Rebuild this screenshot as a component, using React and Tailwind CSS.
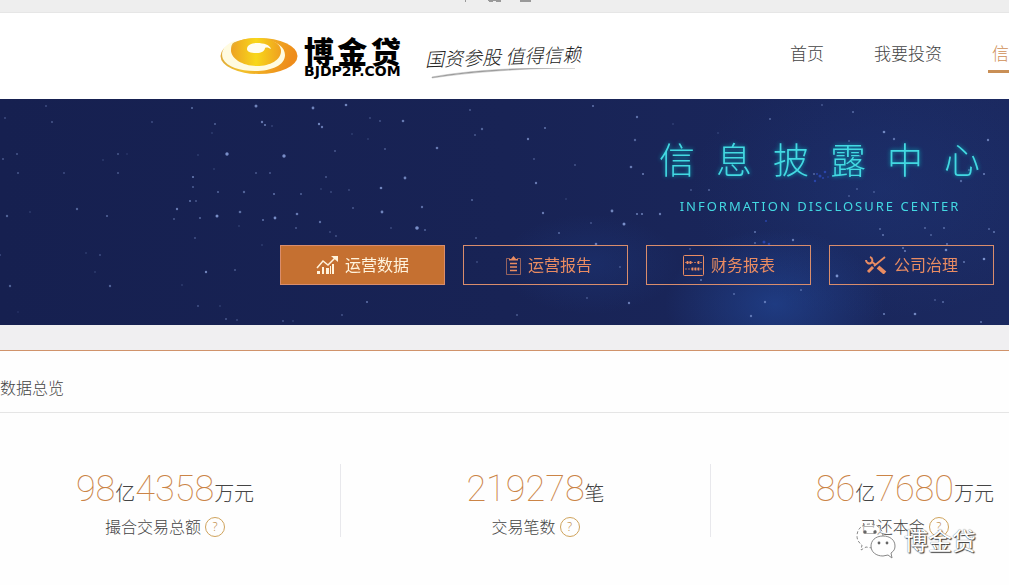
import React from "react";

// [x, y, radius, opacity]
const STARS = [
  [192, 9, 1, .7], [256, 7, 1.5, .9], [313, 9, 1.4, .9], [346, 6, 1.3, .9], [46, 7, 1, .4], [5, 19, 1, .4],
  [52, 23, 1, .5], [152, 23, 1, .4], [215, 25, 1, .6], [262, 23, 1.2, .8], [265, 26, 1.1, .8], [272, 27, .8, .5],
  [319, 25, 1.2, .9], [322, 28, 1.2, .8], [370, 19, .9, .4], [380, 22, .9, .5], [403, 22, 1.3, .8], [212, 34, .8, .4],
  [352, 35, .8, .4], [368, 40, .8, .4], [482, 30, 1.2, .6], [475, 36, 1, .5], [470, 11, 1, .5], [437, 49, 1.3, .8],
  [385, 50, 1, .5], [335, 52, 1, .5], [227, 55, 1.7, 1], [284, 57, 1.7, 1], [198, 56, .8, .4], [17, 55, 1, .5],
  [118, 55, 1, .5], [127, 55, .8, .3], [3, 60, 1, .5], [103, 61, .8, .4], [18, 74, 1, .5], [64, 74, 1, .4],
  [118, 74, 1, .5], [214, 70, .8, .4], [256, 74, 1, .5], [270, 74, 1, .5], [193, 78, 1.1, .8], [193, 88, .9, .6],
  [326, 78, 1, .5], [405, 79, 1.4, .9], [381, 89, 1.3, .9], [244, 93, 1.2, .6], [218, 93, 1.1, .6], [274, 95, 1.1, .7],
  [301, 95, 1, .6], [331, 93, .9, .4], [321, 90, .8, .4], [349, 91, .9, .4], [190, 102, 1.1, .7], [196, 102, 1, .5],
  [177, 110, 1.2, .8], [77, 110, 1.2, .6], [240, 113, 1.3, .7], [217, 117, 1.5, 1], [200, 119, 1.1, .6], [174, 120, 1, .5],
  [275, 119, 1.4, 1], [263, 121, 1.1, .7], [297, 115, 1.3, .8], [320, 123, 1.2, .7], [296, 129, 1, .5], [353, 109, 1, .5],
  [382, 113, 1.4, .9], [422, 108, 1.2, .7], [472, 101, 1.1, .6], [417, 129, 1.8, 1], [425, 131, 1, .6], [391, 129, .9, .4],
  [7, 117, 1.2, .6], [107, 117, 1.1, .6], [30, 113, .8, .4], [239, 127, .8, .4], [195, 139, .9, .5], [330, 133, .9, .4],
  [336, 137, .9, .5], [318, 147, .9, .4], [262, 146, .8, .4], [476, 139, 1, .5], [100, 156, 1, .4], [86, 154, .8, .4],
  [0, 156, 1, .4], [95, 173, .8, .4], [206, 173, 1.2, .9], [235, 171, 1, .5], [10, 187, 1.2, .6], [110, 187, 1.2, .6],
  [182, 186, .8, .4], [367, 203, 1.1, .7], [198, 207, .9, .5], [220, 207, .8, .4], [342, 216, .9, .5], [226, 220, 1, .5],
  [237, 221, .9, .4], [283, 222, .9, .5], [293, 222, .8, .4], [18, 213, .7, .3], [477, 163, .9, .4],
  [593, 7, 1.1, .7], [637, 18, 1.2, .7], [545, 29, 1.1, .7], [528, 40, 1.2, .8], [635, 41, 1.2, .6], [534, 60, .9, .5],
  [575, 66, .9, .5], [631, 68, 1.3, .8], [643, 75, 1.1, .8], [536, 84, 1.2, .8], [691, 91, .9, .5], [709, 91, 1, .6],
  [543, 114, 1.2, .8], [612, 112, 1.4, .9], [624, 125, 1.5, 1], [637, 115, 1.1, .8], [642, 115, 1.1, .8], [660, 115, 1.2, .8],
  [591, 124, .9, .5], [559, 134, 1.1, .6], [596, 145, 1.3, .8], [770, 20, 1, .6], [822, 6, .9, .5], [853, 13, 1.1, .6],
  [884, 33, 1.3, .9], [894, 40, 1.2, .7], [988, 41, 1.2, .8], [849, 42, .9, .5], [860, 57, .9, .5], [984, 75, 1.1, .8],
  [969, 71, 1.1, .6], [961, 82, 1.2, .6], [874, 93, .9, .5], [849, 97, .9, .5], [857, 90, .9, .5], [880, 130, 1, .6],
  [883, 136, 1.1, .7], [755, 133, 1.1, .7], [755, 144, 1, .6], [793, 141, 1.2, .8], [925, 129, 1, .6], [944, 129, 1.1, .6],
  [931, 136, .9, .6], [989, 130, 1, .6], [994, 133, 1.1, .7], [903, 149, 1.1, .7], [947, 145, 1.1, .7], [946, 151, 1.3, .9],
  [905, 152, 1.1, .8], [984, 160, 1.3, 1], [964, 163, 1.1, .7], [837, 177, 1.4, 1], [620, 168, .9, .5], [701, 181, 1.1, .7],
  [801, 191, 1, .6], [734, 195, 1, .6], [629, 204, 1.2, .8], [587, 199, .9, .5], [765, 203, 1.2, .7], [751, 217, 1.2, .7],
  [884, 215, 1.1, .8], [915, 215, 1.3, .9], [981, 223, 1.1, .7], [943, 203, 1.1, .6], [935, 201, .9, .5], [517, 216, 1, .5],
  [736, 109, .9, .4], [566, 100, .8, .4], [690, 150, .9, .5], [814, 75, 1, .6], [718, 34, .8, .4], [673, 25, .8, .4],
];

const navLinks = ["首页", "我要投资"];

function StarField() {
  return (
    <svg className="absolute inset-0 h-full w-full" viewBox="0 0 1009 226" preserveAspectRatio="xMinYMin slice" aria-hidden="true">
      <defs>
        <radialGradient id="nebula">
          <stop offset="0" stopColor="#2450a8" stopOpacity=".5" />
          <stop offset="1" stopColor="#2450a8" stopOpacity="0" />
        </radialGradient>
        <linearGradient id="night">
          <stop offset="0" stopColor="#162050" />
          <stop offset=".5" stopColor="#182355" />
          <stop offset="1" stopColor="#1b2960" />
        </linearGradient>
      </defs>
      <rect width="1009" height="226" fill="url(#night)" />
      <ellipse cx="775" cy="205" rx="110" ry="75" fill="url(#nebula)" />
      <ellipse cx="880" cy="90" rx="190" ry="130" fill="url(#nebula)" opacity=".35" />
      <ellipse cx="590" cy="165" rx="90" ry="50" fill="url(#nebula)" opacity=".4" />
      <g fill="#3457d8" opacity=".6">
        <circle cx="820" cy="77" r="1.5" /><circle cx="825" cy="73" r="1.3" /><circle cx="815" cy="82" r="1.2" />
        <circle cx="823" cy="79" r="1" /><circle cx="817" cy="75" r="1" /><circle cx="828" cy="78" r=".8" />
        <circle cx="764" cy="143" r="1.5" /><circle cx="769" cy="145" r="1.3" /><circle cx="766" cy="122" r="1" />
      </g>
      <g fill="#93abe6" opacity=".8">
        {STARS.map(([x, y, r, o], i) => <circle key={i} cx={x} cy={y} r={r} opacity={o} />)}
      </g>
    </svg>
  );
}

function Swirl() {
  return (
    <svg width="78" height="38" viewBox="0 0 78 38" aria-hidden="true">
      <defs>
        <linearGradient id="gold" x1="0" x2="1" y1="0" y2=".2">
          <stop offset="0" stopColor="#d9a441" />
          <stop offset=".45" stopColor="#f2c12a" />
          <stop offset="1" stopColor="#ee8c1a" />
        </linearGradient>
        <linearGradient id="core" x1="0" x2="1" y1="0" y2="0">
          <stop offset="0" stopColor="#eda224" />
          <stop offset=".5" stopColor="#f8d71a" />
          <stop offset="1" stopColor="#efa01f" />
        </linearGradient>
      </defs>
      <ellipse cx="39" cy="19" rx="38.500" ry="18" fill="url(#gold)" />
      <path fill="#fffbe0" d="M17 3C4 7 0 15 3 22c4 8 17 12 32 12 17 0 30-6 30-16C65 10 57 5 47 3c8 3 13 7 12 13H12C10 11 11 6 17 3Z" />
      <path fill="url(#core)" d="M11 13C12 5 23 1 36 1c14 0 25 5 25 13 0 9-11 15-24 15C23 29 11 22 11 13Z" />
      <path fill="#fffdf0" d="M27 12c0-4 5-6 10-6 7 0 13 2 14 6-2-1-4-2-6-1 0 3-4 5-8 5-6 0-10-1-10-4Z" />
    </svg>
  );
}

function ChartIcon() {
  return (
    <svg width="22" height="18" viewBox="0 0 22 18" fill="currentColor" aria-hidden="true">
      <path d="M1 15h3v3H1zM6 11h2v7H6zM10 12h3v6h-3zM16 8h2v10h-2zM14 10h1v8h-1z" />
      <path d="M1 12 7 5l5 4 7-7" fill="none" stroke="currentColor" strokeWidth="1.500" />
      <path d="M15 0h7v6z" />
    </svg>
  );
}

function ClipboardIcon() {
  return (
    <svg width="15" height="19" viewBox="0 0 15 19" fill="none" stroke="currentColor" aria-hidden="true">
      <path d="M4 2.500H.5v16h14v-16H11" opacity=".6" />
      <path d="M3 4.500V3h2l2.500-3L10 3h2v1.500z" fill="currentColor" stroke="none" />
      <path d="M4 7.500h7M4 11h7M4 14.500h7" strokeWidth="1.400" />
    </svg>
  );
}

function AbacusIcon() {
  return (
    <svg width="21" height="21" viewBox="0 0 21 21" fill="none" stroke="currentColor" aria-hidden="true">
      <rect x=".5" y=".5" width="20" height="20" rx="1" />
      <path d="M2 7.500h17M2 14h17" strokeDasharray="2 1" opacity=".7" />
      <path d="M4.500 6v3M7.500 6v3M15.500 6v3M9.500 12.500v3M12.500 12.500v3M15.500 12.500v3" strokeWidth="1.800" />
    </svg>
  );
}

function ToolsIcon() {
  return (
    <svg width="22" height="18" viewBox="0 0 22 18" fill="none" stroke="currentColor" aria-hidden="true">
      <path d="M1 4c0 3 3 4 5 3 2-1 2-5-1-6" strokeWidth="2" />
      <path d="m7 6 4 3" strokeWidth="2" />
      <path d="m13 11 7 6" strokeWidth="4" />
      <path d="M20 1 9 10" strokeWidth="1.800" />
      <path d="m8 11-5 5" strokeWidth="3" />
    </svg>
  );
}

const tabs = [
  { label: "运营数据", Icon: ChartIcon, active: true },
  { label: "运营报告", Icon: ClipboardIcon },
  { label: "财务报表", Icon: AbacusIcon },
  { label: "公司治理", Icon: ToolsIcon },
];

const stats = [
  { parts: [["98", "亿"], ["4358", "万元"]], label: "撮合交易总额", place: "justify-center border-r pr-[10px]" },
  { parts: [["219278", "笔"]], label: "交易笔数", place: "justify-center border-r pl-5" },
  { parts: [["86", "亿"], ["7680", "万元"]], label: "已还本金", place: "justify-end pr-[15px]" },
];

function Stat({ parts, label, place }) {
  return (
    <div className={`flex h-[73px] border-[#e8e8ec] ${place}`}>
      <div className="flex flex-col items-center pt-[5px]">
        <p className="flex h-[40px] shrink-0 items-baseline whitespace-nowrap text-[20px] leading-[40px] text-[#444]">
          {parts.map(([n, unit]) => (
            <React.Fragment key={n}>
              <span className="font-[Roboto] text-[36px] font-thin text-[#cb8446]">{n}</span>
              <span>{unit}</span>
            </React.Fragment>
          ))}
        </p>
        <div className="flex h-[36px] shrink-0 items-center gap-1 text-[16px] text-[#444]">
          <span>{label}</span>
          <button type="button" aria-label={label} className="flex size-5 items-center justify-center rounded-full border border-[#cfa35c] text-[12px] text-[#c08c4a]">?</button>
        </div>
      </div>
    </div>
  );
}

export default function App() {
  return (
    <div className="relative min-h-screen overflow-hidden bg-[#fefefe] font-['Noto_Sans','Noto_Sans_CJK_SC',sans-serif] font-light">
      <div className="flex h-[13px] items-start border-b border-[#e6e6e6] bg-[#eee] pl-[464px]">
        <svg width="70" height="3" viewBox="0 0 70 3" fill="#999" aria-hidden="true">
          <path d="M1 0h1v2H1zM24 0h13v1H24zM25 1h4v1h-4zM32 1h5v1h-5zM56 0h11v2H56z" />
        </svg>
      </div>
      <header className="flex h-[86px] items-center bg-white pl-[220px]">
        <a href="#" className="flex shrink-0 items-center gap-[6px] text-black">
          <Swirl />
          <span className="flex flex-col pt-[2px]">
            <span className="flex justify-between font-['Noto_Sans_CJK_SC',sans-serif] text-[30px] leading-[28px] font-black">
              <span>博</span><span>金</span><span>贷</span>
            </span>
            <span className="font-['DejaVu_Sans',sans-serif] text-[14px] leading-[14px] font-bold">BJDP2P.COM</span>
          </span>
        </a>
        <div className="ml-6 flex w-[160px] shrink-0 flex-col pt-3">
          <p className="-rotate-2 font-['Noto_Sans_CJK_SC',sans-serif] text-[19px] leading-6 whitespace-nowrap text-[#222] italic">国资参股 值得信赖</p>
          <svg width="160" height="12" viewBox="0 0 160 12" aria-hidden="true">
            <path d="M7 9C45 2 100-1 150 0 102 0 47 4 7 10Z" fill="#999" stroke="#aaa" strokeWidth=".5" />
          </svg>
        </div>
        <nav className="ml-auto flex gap-[42px] pb-[2px] text-[17px] text-[#444]">
          {navLinks.map((t) => (
            <a key={t} href="#" className="border-b-[3px] border-transparent px-1 leading-[32px] whitespace-nowrap">{t}</a>
          ))}
          <a href="#" aria-current="page" className="border-b-[3px] border-[#c98f56] pl-1 leading-[32px] text-[#cf8f55]">信</a>
        </nav>
      </header>

      <section className="relative bg-[#182355]">
        <StarField />
        <div className="relative flex h-[226px] flex-col items-end">
          <div className="mr-2 flex flex-col items-center pt-[34px] text-[#43d9e2]">
            <h1 className="font-['Noto_Sans_CJK_SC',sans-serif] text-[36px] leading-[50px] tracking-[21px] [text-shadow:0_0_4px_#0aa5b5]">信息披露中心</h1>
            <p className="mt-3 pr-5 font-['Noto_Sans'] text-[13px] leading-[22px] font-normal tracking-[2px]">INFORMATION DISCLOSURE CENTER</p>
          </div>
          <div className="mt-[28px] flex gap-[18px] pr-[15px]">
            {tabs.map(({ label, Icon, active }) => (
              <button
                key={label}
                type="button"
                className={`flex h-[40px] w-[165px] items-center justify-center gap-[7px] border border-[#d98d6c] text-[16px] font-normal ${active ? "bg-[#c57031] text-[#fff3dc]" : "text-[#ea8c62]"}`}
              >
                <span className="flex w-[22px] justify-end"><Icon /></span>
                <span>{label}</span>
              </button>
            ))}
          </div>
        </div>
      </section>

      <div className="h-[25px] bg-[#f0eff1]" />

      <main className="border-t border-[#d0936b]">
        <h2 className="border-b border-[#e5e5e5] pt-[25px] pb-3 text-[16px] leading-6 font-light text-[#444]">数据总览</h2>
        <div className="grid grid-cols-[341fr_370fr_298fr] pt-[51px]">
          {stats.map((s) => <Stat key={s.label} {...s} />)}
        </div>
      </main>

      <div className="absolute right-[33px] bottom-[26px] flex items-center gap-2">
        <svg width="40" height="36" viewBox="0 0 40 36" fill="#fff" stroke="#888" strokeWidth="1" aria-hidden="true">
          <path d="M14 1C6 1 1 6 1 13c0 4 2 7 5 9l-1 5 5-3 6 1C23 24 27 19 27 13 27 6 21 1 14 1Z" strokeDasharray="3 2" fillOpacity=".5" />
          <path d="M27 13c-8 0-12 5-12 10 0 6 5 10 12 10l5-1 4 3-1-5c3-2 4-4 4-7 0-6-5-10-12-10Z" />
          <g fill="#666" stroke="none"><circle cx="9" cy="9" r="1.700" /><circle cx="19" cy="9" r="1.700" /><circle cx="23" cy="20" r="1.400" /><circle cx="31" cy="20" r="1.400" /></g>
        </svg>
        <span className="text-[24px] leading-[36px] font-normal text-white [text-shadow:1px_1px_1px_#333,0_0_1px_#555]">博金贷</span>
      </div>
    </div>
  );
}
